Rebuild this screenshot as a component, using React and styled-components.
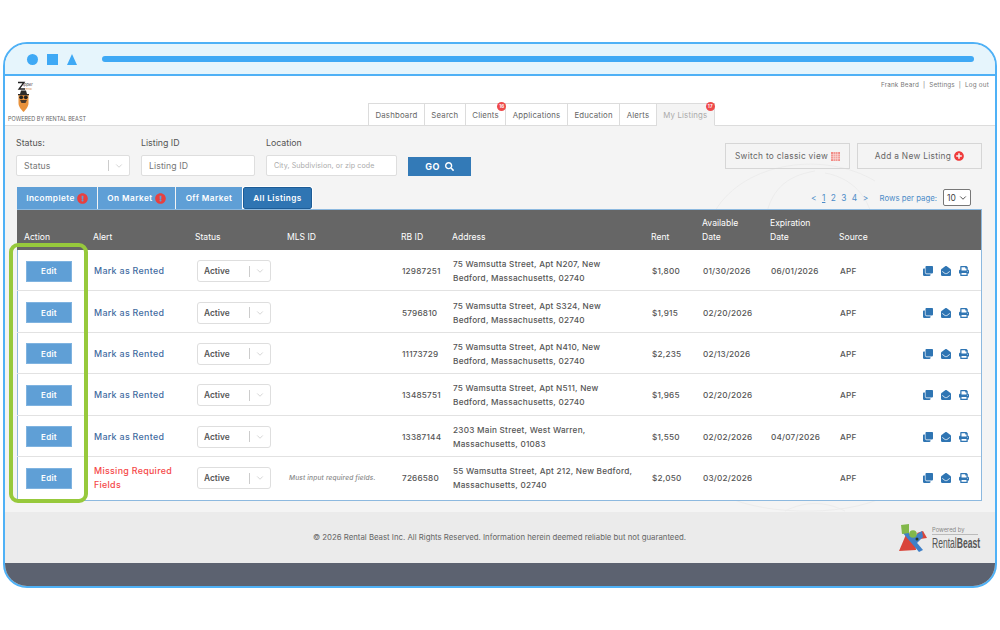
import React from 'react'
import styled, { createGlobalStyle } from 'styled-components'
import { FaClone, FaEnvelopeOpen, FaPrint, FaSearch, FaPlusCircle, FaExclamationCircle } from 'react-icons/fa'
import { ChevronDown } from 'lucide-react'

const GlobalStyle = createGlobalStyle`
  html, body { margin: 0; padding: 0; background: #fff; }
  body { font-family: Inter, "Open Sans", "Liberation Sans", sans-serif; color: #555; }
  * { box-sizing: border-box; }
`

const COLUMNS = '76px 102px 92px 114px 51px 199px 51px 68px 69px 83px 1fr'

const Page = styled.div`
  width: 1000px;
  height: 630px;
  padding: 42px 3px 0;
  overflow: hidden;
`

const Frame = styled.div`
  position: relative;
  height: 546px;
  border: 2px solid #4fb1f6;
  border-radius: 24px;
  overflow: hidden;
  display: flex;
  flex-direction: column;
  background: #f4f4f4;
`

const WindowBar = styled.div`
  height: 32px;
  flex: none;
  background: #e6f5fc;
  border-bottom: 2px solid #4fb1f6;
  display: flex;
  align-items: center;
  padding: 0 21px 0 22px;
`

const Dot = styled.span`
  width: 11px;
  height: 11px;
  border-radius: 50%;
  background: #3fa9f5;
`

const Square = styled.span`
  width: 11px;
  height: 11px;
  margin-left: 9px;
  background: #3fa9f5;
`

const Triangle = styled.span`
  width: 0;
  height: 0;
  margin-left: 9px;
  border-left: 5.5px solid transparent;
  border-right: 5.5px solid transparent;
  border-bottom: 11px solid #3fa9f5;
`

const UrlBar = styled.span`
  flex: 1;
  height: 6px;
  margin-left: 25px;
  border-radius: 3px;
  background: #3fa9f5;
`

const Header = styled.header`
  height: 50px;
  flex: none;
  background: #fff;
  border-bottom: 1px solid #dcdcdc;
  display: flex;
  justify-content: space-between;
`

const Brand = styled.div`
  width: 363px;
  padding: 5px 0 0 3px;
  display: flex;
  flex-direction: column;
`

const BrandMark = styled.svg`
  width: 20px;
  height: 33px;
  margin-left: 9px;
`

const BrandText = styled.span`
  font-size: 5.5px;
  line-height: 8px;
  margin-top: 1px;
  color: #666;
  white-space: nowrap;
`

const HeaderRight = styled.div`
  flex: 1;
  display: flex;
  flex-direction: column;
  justify-content: space-between;
`

const UserLinks = styled.div`
  align-self: flex-end;
  padding: 5px 6px 0 0;
  font-size: 6.3px;
  line-height: 9px;
  letter-spacing: 0.2px;
  color: #777;
`

const Nav = styled.nav`
  display: flex;
  height: 23px;
  margin-bottom: -1px;
`

const NavTab = styled.div`
  position: relative;
  padding: 0 6.5px;
  display: flex;
  align-items: center;
  font-size: 7.8px;
  letter-spacing: 0.18px;
  color: ${p => (p.$active ? '#aaa' : '#666')};
  background: ${p => (p.$active ? '#f4f4f4' : '#fff')};
  border: 1px solid #dcdcdc;
  border-left-width: ${p => (p.$first ? '1px' : '0')};
  border-bottom-color: ${p => (p.$active ? '#f4f4f4' : '#dcdcdc')};
`

const NavBadge = styled.span`
  position: absolute;
  top: -2px;
  right: -1px;
  width: 9px;
  height: 9px;
  border-radius: 50%;
  background: #ef4a4a;
  color: #fff;
  font-size: 4.5px;
  font-weight: 700;
  line-height: 9px;
  text-align: center;
`

const Body = styled.main`
  position: relative;
  flex: 1;
  padding: 11px 13px 0 11px;
`

const Watermark = styled.svg`
  position: absolute;
  left: 700px;
  top: 25px;
  width: 220px;
  height: 370px;
  pointer-events: none;
`

const FilterRow = styled.div`
  position: relative;
  display: flex;
  align-items: flex-start;
  height: 49px;
`

const Field = styled.div`
  width: ${p => p.$w}px;
  margin-right: 11px;
`

const FieldLabel = styled.div`
  font-size: 8.8px;
  line-height: 12px;
  margin-bottom: 6px;
  color: #555;
`

const InputBox = styled.div`
  height: 21px;
  background: #fff;
  border: 1px solid #dedede;
  border-radius: 2px;
  display: flex;
  align-items: center;
  padding-left: 7px;
  font-size: ${p => (p.$small ? '7.1px' : '8.7px')};
  letter-spacing: 0.1px;
  color: ${p => (p.$small ? '#aaa' : '#777')};
`

const SelectArrow = styled.span`
  margin-left: auto;
  width: 21px;
  height: 11px;
  border-left: 1px solid #ccc;
  display: flex;
  align-items: center;
  justify-content: center;
  color: #bbb;
`

const GoButton = styled.button`
  width: 63px;
  height: 19px;
  margin-top: 20px;
  border: 0;
  border-radius: 0;
  background: #337ab7;
  color: #fff;
  font: 700 9px Inter, sans-serif;
  letter-spacing: 0.3px;
  display: flex;
  align-items: center;
  justify-content: center;
  gap: 5px;
`

const RightButtons = styled.div`
  margin-left: auto;
  margin-top: 6px;
  display: flex;
  gap: 7px;
`

const GhostButton = styled.div`
  width: 125px;
  height: 26px;
  border: 1px solid #d6d6d6;
  display: flex;
  align-items: center;
  justify-content: center;
  gap: 3px;
  font-size: 8.3px;
  letter-spacing: 0.32px;
  color: #666;
`

const GridIcon = styled.svg`
  width: 9px;
  height: 9px;
`

const ToolRow = styled.div`
  position: relative;
  display: flex;
  align-items: flex-end;
  height: 23px;
  margin: 0 0 0 1px;
`

const StatusTab = styled.div`
  width: ${p => p.$w}px;
  height: 22px;
  margin-right: 1px;
  background: ${p => (p.$active ? '#2f75b3' : '#5f9fd6')};
  border: ${p => (p.$active ? '1px solid #1d5c96' : '0')};
  border-radius: ${p => (p.$active ? '2px' : '0')};
  color: #fff;
  font-size: 8.2px;
  font-weight: 600;
  letter-spacing: 0.45px;
  display: flex;
  align-items: center;
  justify-content: center;
  gap: 2px;
  outline: ${p => (p.$active ? '1px solid #fff' : 'none')};
`

const Pager = styled.div`
  margin-left: auto;
  height: 23px;
  display: flex;
  align-items: center;
  color: #4d8cc8;
  font-size: 8.4px;
`

const PageLink = styled.span`
  margin-right: 5.4px;
  text-decoration: ${p => (p.$current ? 'underline' : 'none')};
`

const RowsLabel = styled.span`
  margin: 0 6px 0 6px;
  font-size: 7.8px;
`

const RowsSelect = styled.div`
  width: 28px;
  height: 17px;
  background: #fff;
  border: 1px solid #777;
  border-radius: 2px;
  color: #444;
  font-size: 8.5px;
  display: flex;
  align-items: center;
  justify-content: space-between;
  padding: 0 2px 0 3px;
  margin-right: 11px;
`

const Table = styled.div`
  position: relative;
  margin-left: 1px;
  background: #fff;
  border: 1px solid #8db9df;
`

const HeadRow = styled.div`
  height: 40px;
  background: #666;
  color: #fff;
  display: grid;
  grid-template-columns: ${COLUMNS};
  align-items: end;
  padding-bottom: 6px;
  font-size: 8.6px;
  line-height: 14px;
  margin-left: -1px;
`

const HeadCell = styled.div`
  padding-left: ${p => (p.$first ? '7px' : '0')};
`

const Row = styled.div`
  height: 41.4px;
  padding-top: 2px;
  display: grid;
  grid-template-columns: ${COLUMNS};
  align-items: center;
  border-bottom: 1px solid #e2e2e2;
  margin-left: -1px;
  &:last-child {
    height: 43px;
    padding-top: 0;
    border-bottom: 0;
  }
`

const Cell = styled.div`
  font-size: 8.2px;
  color: #555;
  font-weight: 500;
  letter-spacing: 0.2px;
  padding-left: 1px;
`

const EditButton = styled.button`
  display: block;
  width: 46px;
  height: 21px;
  margin-left: 9px;
  border: 1px solid #7fb3e0;
  background: #5f9fd6;
  color: #fff;
  font: 600 8px Inter, sans-serif;
  letter-spacing: 0.3px;
  border-radius: 0;
`

const AlertText = styled.div`
  font-size: 8.9px;
  line-height: 14px;
  font-weight: 500;
  letter-spacing: 0.3px;
  padding-left: 1px;
  color: ${p => (p.$missing ? '#f54848' : '#3f6b9f')};
`

const RowSelect = styled.div`
  width: 74px;
  height: 22px;
  margin-left: 2px;
  border: 1px solid #dedede;
  border-radius: 3px;
  display: flex;
  align-items: center;
  padding-left: 6px;
  font-size: 8.4px;
  font-weight: 600;
  color: #555;
`

const MlsNote = styled.div`
  font-size: 6.6px;
  font-style: italic;
  font-weight: 500;
  letter-spacing: 0.15px;
  color: #888;
  padding-left: 2px;
  white-space: nowrap;
`

const AddressCell = styled(Cell)`
  line-height: 14px;
  letter-spacing: 0.25px;
  white-space: nowrap;
`

const IconGroup = styled.div`
  display: flex;
  gap: 8px;
  color: #2f75b3;
  font-size: 10px;
  align-items: center;
  padding-left: 1px;
`

const Highlight = styled.div`
  position: absolute;
  left: 4px;
  top: 199px;
  width: 79px;
  height: 260px;
  border: 4px solid #97c93c;
  border-radius: 9px;
  pointer-events: none;
`

const Footer = styled.footer`
  flex: none;
  height: 51px;
  background: #ebebeb;
  display: flex;
  align-items: center;
  padding: 0 17px 2px 308px;
  font-size: 7.8px;
  color: #666;
`

const FooterLogo = styled.div`
  margin-left: auto;
  margin-top: 3px;
  display: flex;
  align-items: center;
  gap: 5px;
`

const LogoMark = styled.svg`
  width: 28px;
  height: 28px;
`

const LogoText = styled.div`
  width: 46px;
  display: flex;
  flex-direction: column;
`

const PoweredBy = styled.span`
  font-size: 5.8px;
  line-height: 7px;
  color: #888;
  border-bottom: 1px solid #bbb;
  padding-bottom: 1px;
`

const LogoName = styled.span`
  font-family: "Liberation Sans", sans-serif;
  font-size: 15px;
  line-height: 15px;
  color: #555;
  transform: scaleX(0.57);
  transform-origin: left;
  white-space: nowrap;
`

const LogoBold = styled.span`
  font-weight: 700;
`

const BottomBar = styled.div`
  flex: none;
  height: 23px;
  background: #5c6270;
`

const listings = [
  { id: '12987251', address: ['75 Wamsutta Street, Apt N207, New', 'Bedford, Massachusetts, 02740'], rent: '$1,800', available: '01/30/2026', expiration: '06/01/2026' },
  { id: '5796810', address: ['75 Wamsutta Street, Apt S324, New', 'Bedford, Massachusetts, 02740'], rent: '$1,915', available: '02/20/2026' },
  { id: '11173729', address: ['75 Wamsutta Street, Apt N410, New', 'Bedford, Massachusetts, 02740'], rent: '$2,235', available: '02/13/2026' },
  { id: '13485751', address: ['75 Wamsutta Street, Apt N511, New', 'Bedford, Massachusetts, 02740'], rent: '$1,965', available: '02/20/2026' },
  { id: '13387144', address: ['2303 Main Street, West Warren,', 'Massachusetts, 01083'], rent: '$1,550', available: '02/02/2026', expiration: '04/07/2026' },
  { id: '7266580', address: ['55 Wamsutta Street, Apt 212, New Bedford,', 'Massachusetts, 02740'], rent: '$2,050', available: '03/02/2026', missing: true },
]

const navItems = [
  { label: 'Dashboard' },
  { label: 'Search' },
  { label: 'Clients', badge: '16' },
  { label: 'Applications' },
  { label: 'Education' },
  { label: 'Alerts' },
  { label: 'My Listings', badge: '17', active: true },
]

const App = () => (
  <Page>
    <GlobalStyle />
    <Frame>
      <WindowBar>
        <Dot />
        <Square />
        <Triangle />
        <UrlBar />
      </WindowBar>
      <Header>
        <Brand>
          <BrandMark viewBox="0 0 20 33">
            <path d="M1 1.500h6L2 8h6" fill="none" stroke="#222" strokeWidth="1.300" />
            <text x="6" y="5" fontSize="4" fontStyle="italic" fill="#333">ipper</text>
            <text x="8" y="8.500" fontSize="2.600" fill="#d99045">rental</text>
            <path d="M1.500 13h10v9c0 4-3 7-5 9-2-2-5-5-5-9z" fill="#e8923c" />
            <path d="M4 9.500h5l1 3.500h2v1.300H1v-1.300h2z" fill="#2b2b2b" />
            <circle cx="4.200" cy="16.300" r="1.900" fill="#222" />
            <circle cx="8.800" cy="16.300" r="1.900" fill="#222" />
            <path d="M3 19h7l-1.500 3h-4z" fill="#4a3a2c" />
          </BrandMark>
          <BrandText>POWERED BY RENTAL BEAST</BrandText>
        </Brand>
        <HeaderRight>
          <UserLinks>Frank Beard &nbsp;|&nbsp; Settings &nbsp;|&nbsp; Log out</UserLinks>
          <Nav>
            {navItems.map((item, i) => (
              <NavTab key={item.label} $first={i === 0} $active={item.active}>
                {item.label}
                {item.badge && <NavBadge>{item.badge}</NavBadge>}
              </NavTab>
            ))}
          </Nav>
        </HeaderRight>
      </Header>
      <Body>
        <Watermark viewBox="0 0 220 370" fill="none" stroke="#ececec" strokeWidth="1">
          <path d="M10 60C40 10 120 0 170 30M60 70C65 40 80 25 110 20M120 22c30 5 50 30 48 60" />
          <path d="M20 345c40 20 130 22 170-5M80 360c20-10 40-10 60 0" />
        </Watermark>
        <FilterRow>
          <Field $w={114}>
            <FieldLabel>Status:</FieldLabel>
            <InputBox>
              Status
              <SelectArrow><ChevronDown size={10} strokeWidth={1.5} /></SelectArrow>
            </InputBox>
          </Field>
          <Field $w={114}>
            <FieldLabel>Listing ID</FieldLabel>
            <InputBox>Listing ID</InputBox>
          </Field>
          <Field $w={131}>
            <FieldLabel>Location</FieldLabel>
            <InputBox $small>City, Subdivision, or zip code</InputBox>
          </Field>
          <GoButton>GO <FaSearch size={9} /></GoButton>
          <RightButtons>
            <GhostButton>
              Switch to classic view
              <GridIcon viewBox="0 0 9 9">
                <rect width="9" height="9" fill="#f08a84" />
                <path d="M2.750 0v9M4.750 0v9M6.750 0v9M0 2.750h9M0 4.750h9M0 6.750h9" stroke="#fbe4e2" strokeWidth="0.700" />
              </GridIcon>
            </GhostButton>
            <GhostButton>Add a New Listing <FaPlusCircle size={10} color="#ef3b3b" /></GhostButton>
          </RightButtons>
        </FilterRow>
        <ToolRow>
          <StatusTab $w={80}>Incomplete <FaExclamationCircle size={11} color="#e8403f" /></StatusTab>
          <StatusTab $w={77}>On Market <FaExclamationCircle size={11} color="#e8403f" /></StatusTab>
          <StatusTab $w={66}>Off Market</StatusTab>
          <StatusTab $w={69} $active>All Listings</StatusTab>
          <Pager>
            <PageLink>&lt;</PageLink>
            <PageLink $current>1</PageLink>
            <PageLink>2</PageLink>
            <PageLink>3</PageLink>
            <PageLink>4</PageLink>
            <PageLink>&gt;</PageLink>
            <RowsLabel>Rows per page:</RowsLabel>
            <RowsSelect>10 <ChevronDown size={10} strokeWidth={2.2} /></RowsSelect>
          </Pager>
        </ToolRow>
        <Table>
          <HeadRow>
            <HeadCell $first>Action</HeadCell>
            <HeadCell>Alert</HeadCell>
            <HeadCell>Status</HeadCell>
            <HeadCell>MLS ID</HeadCell>
            <HeadCell>RB ID</HeadCell>
            <HeadCell>Address</HeadCell>
            <HeadCell>Rent</HeadCell>
            <HeadCell>Available<br />Date</HeadCell>
            <HeadCell>Expiration<br />Date</HeadCell>
            <HeadCell>Source</HeadCell>
            <HeadCell />
          </HeadRow>
          {listings.map(l => (
            <Row key={l.id}>
              <div><EditButton>Edit</EditButton></div>
              <AlertText $missing={l.missing}>
                {l.missing ? <>Missing Required<br />Fields</> : 'Mark as Rented'}
              </AlertText>
              <RowSelect>
                Active
                <SelectArrow><ChevronDown size={10} strokeWidth={1.5} /></SelectArrow>
              </RowSelect>
              <div>{l.missing && <MlsNote>Must input required fields.</MlsNote>}</div>
              <Cell>{l.id}</Cell>
              <AddressCell>{l.address[0]}<br />{l.address[1]}</AddressCell>
              <Cell>{l.rent}</Cell>
              <Cell>{l.available}</Cell>
              <Cell>{l.expiration}</Cell>
              <Cell>APF</Cell>
              <IconGroup>
                <FaClone />
                <FaEnvelopeOpen />
                <FaPrint />
              </IconGroup>
            </Row>
          ))}
        </Table>
      </Body>
      <Footer>
        © 2026 Rental Beast Inc. All Rights Reserved. Information herein deemed reliable but not guaranteed.
        <FooterLogo>
          <LogoMark viewBox="0 0 28 28">
            <path d="M8 8l8 6 1 12-17 1 3-7z" fill="#d9453a" />
            <path d="M18 9l6-2 4 7-7 1z" fill="#d9453a" />
            <path d="M3 8l5-1 16 19-4 2z" fill="#3f80c8" />
            <path d="M12 14l11-7 1 6-7 7z" fill="#3f80c8" />
            <path d="M2 1l8-1v9l-7 1z" fill="#82b84a" />
            <circle cx="14" cy="10" r="3.800" fill="#82b84a" />
            <circle cx="18" cy="15" r="1.500" fill="#2a3a22" />
          </LogoMark>
          <LogoText>
            <PoweredBy>Powered by</PoweredBy>
            <LogoName>Rental<LogoBold>Beast</LogoBold></LogoName>
          </LogoText>
        </FooterLogo>
      </Footer>
      <BottomBar />
      <Highlight />
    </Frame>
  </Page>
)

export default App
